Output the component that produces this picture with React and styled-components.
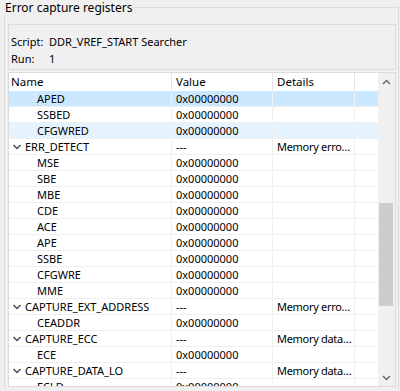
import React from "react";
import styled, { createGlobalStyle } from "styled-components";

const Global = createGlobalStyle`
  html, body { margin: 0; padding: 0; background: #f0f0f0; }
  body { font-family: "Noto Sans", "Noto Sans CJK SC", sans-serif; font-size: 11px; color: #000; }
`;

const Page = styled.div`
  width: 400px;
  height: 391px;
  box-sizing: border-box;
  padding: 7px 1px 2px 4px;
  overflow: hidden;
`;

const Group = styled.div`
  position: relative;
  height: 100%;
  box-sizing: border-box;
  border: 1px solid #dcdcdc;
  border-bottom: none;
  padding: 16px 2px 0 3px;
  display: flex;
  flex-direction: column;
  gap: 2px;
`;

const Legend = styled.div`
  position: absolute;
  left: -1px;
  top: -7px;
  padding: 0 1px;
  background: #f0f0f0;
  font-size: 12px;
  line-height: 14px;
`;

const InfoBox = styled.div`
  height: 46px;
  box-sizing: border-box;
  border: 1px solid #dcdcdc;
  padding: 8px 0 0 2px;
  display: grid;
  grid-template-columns: 38px 1fr;
  grid-auto-rows: 17px;
  align-items: center;
  font-size: 11px;
`;

const TableBox = styled.div`
  height: 315px;
  box-sizing: border-box;
  border: 1px solid #dcdcdc;
  background: #fff;
  display: flex;
  overflow: hidden;
`;

const TableBody = styled.div`
  flex: 1;
  display: flex;
  flex-direction: column;
  overflow: hidden;
`;

const cols = "163px 101px 82px 1fr";

const HeaderRow = styled.div`
  display: grid;
  grid-template-columns: ${cols};
  height: 18px;
  flex-shrink: 0;
  background: #fff;
  font-size: 11.5px;
`;

const HeaderCell = styled.div`
  padding-left: ${(p) => p.$pad || 4}px;
  line-height: 18px;
  border-right: 1px solid #e5e5e5;
  white-space: nowrap;
  overflow: hidden;
  &:last-child { border-right: none; }
`;

const Row = styled.div`
  display: grid;
  grid-template-columns: ${cols};
  height: 16px;
  flex-shrink: 0;
  box-sizing: border-box;
  border-bottom: 1px solid #f0f0f0;
  background: ${(p) => (p.$state === "sel" ? "#cce8ff" : p.$state === "hover" ? "#e5f3ff" : "#fff")};
  font-size: 11px;
`;

const Cell = styled.div`
  display: flex;
  align-items: center;
  line-height: 15px;
  padding-left: 4px;
  border-right: 1px solid #f0f0f0;
  white-space: nowrap;
  overflow: hidden;
  min-width: 0;
  &:last-child { border-right: none; }
`;

const NameCell = styled(Cell)`
  padding-left: ${(p) => (p.$child ? 28 : 2)}px;
`;

const Chevron = styled.svg`
  width: 12px;
  height: 8px;
  flex-shrink: 0;
  margin-right: 2px;
`;

const Details = styled.span`
  overflow: hidden;
  text-overflow: ellipsis;
  white-space: nowrap;
  display: block;
  width: 100%;
  letter-spacing: -0.3px;
`;

const Scrollbar = styled.div`
  width: 17px;
  flex-shrink: 0;
  background: #f0f0f0;
  display: flex;
  flex-direction: column;
`;

const Arrow = styled.div`
  height: 17px;
  flex-shrink: 0;
  display: flex;
  align-items: center;
  justify-content: center;
`;

const Track = styled.div`
  flex: 1;
  display: flex;
  flex-direction: column;
  padding-top: ${(p) => p.$top}px;
`;

const Thumb = styled.div`
  margin: 0 2px 0 1px;
  height: ${(p) => p.$h}px;
  background: #cdcdcd;
`;

const rows = [
  { name: "APED", child: true, value: "0x00000000", state: "sel" },
  { name: "SSBED", child: true, value: "0x00000000" },
  { name: "CFGWRED", child: true, value: "0x00000000", state: "hover" },
  { name: "ERR_DETECT", value: "---", details: "Memory error detection" },
  { name: "MSE", child: true, value: "0x00000000" },
  { name: "SBE", child: true, value: "0x00000000" },
  { name: "MBE", child: true, value: "0x00000000" },
  { name: "CDE", child: true, value: "0x00000000" },
  { name: "ACE", child: true, value: "0x00000000" },
  { name: "APE", child: true, value: "0x00000000" },
  { name: "SSBE", child: true, value: "0x00000000" },
  { name: "CFGWRE", child: true, value: "0x00000000" },
  { name: "MME", child: true, value: "0x00000000" },
  { name: "CAPTURE_EXT_ADDRESS", value: "---", details: "Memory error address" },
  { name: "CEADDR", child: true, value: "0x00000000" },
  { name: "CAPTURE_ECC", value: "---", details: "Memory data ECC" },
  { name: "ECE", child: true, value: "0x00000000" },
  { name: "CAPTURE_DATA_LO", value: "---", details: "Memory data low" },
  { name: "ECLD", child: true, value: "0x00000000" },
];

function ChevronDown() {
  return (
    <Chevron viewBox="0 0 12 8">
      <path d="M2.5 2 L6 5.5 L9.5 2" fill="none" stroke="#444" strokeWidth="1.3" />
    </Chevron>
  );
}

function ArrowIcon({ up }) {
  return (
    <svg width="9" height="6" viewBox="0 0 9 6">
      <path
        d={up ? "M1 5 L4.5 1.5 L8 5" : "M1 1 L4.5 4.5 L8 1"}
        fill="none"
        stroke="#606060"
        strokeWidth="1.3"
      />
    </svg>
  );
}

export default function App() {
  return (
    <>
      <Global />
      <Page>
        <Group>
          <Legend>Error capture registers</Legend>
          <InfoBox>
            <span>Script:</span>
            <span>DDR_VREF_START Searcher</span>
            <span>Run:</span>
            <span>1</span>
          </InfoBox>
          <TableBox>
            <TableBody>
              <HeaderRow>
                <HeaderCell $pad={2}>Name</HeaderCell>
                <HeaderCell>Value</HeaderCell>
                <HeaderCell>Details</HeaderCell>
                <HeaderCell />
              </HeaderRow>
              {rows.map((r) => (
                <Row key={r.name} $state={r.state}>
                  <NameCell $child={r.child}>
                    {!r.child && <ChevronDown />}
                    {r.name}
                  </NameCell>
                  <Cell>{r.value}</Cell>
                  <Cell>
                    <Details>{r.details || ""}</Details>
                  </Cell>
                  <Cell />
                </Row>
              ))}
            </TableBody>
            <Scrollbar>
              <Arrow>
                <ArrowIcon up />
              </Arrow>
              <Track $top={113}>
                <Thumb $h={103} />
              </Track>
              <Arrow>
                <ArrowIcon />
              </Arrow>
            </Scrollbar>
          </TableBox>
        </Group>
      </Page>
    </>
  );
}
